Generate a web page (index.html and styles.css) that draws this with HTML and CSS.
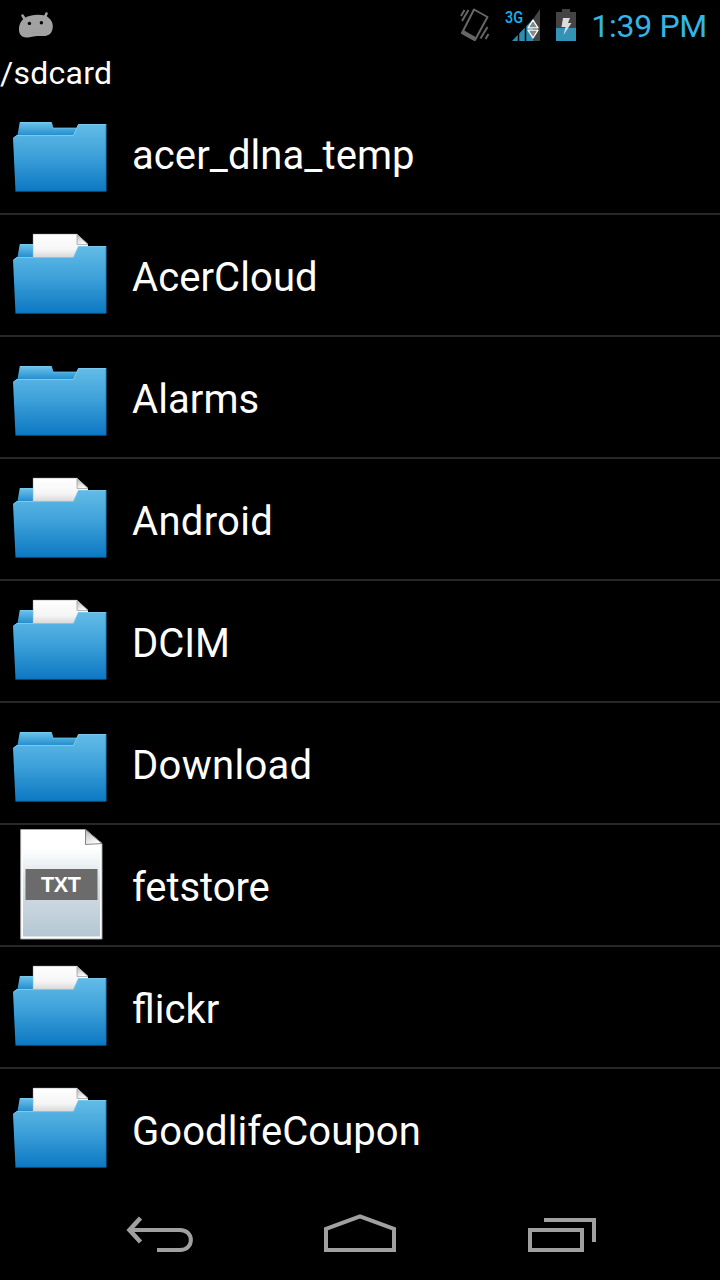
FILE: index.html
```html
<!DOCTYPE html>
<html lang="en">
<head>
<meta charset="utf-8">
<title>File browser</title>
<link rel="stylesheet" href="styles.css">
</head>
<body>
<svg class="defs" width="0" height="0" aria-hidden="true">
  <defs>
    <linearGradient id="front" x1="0" y1="0" x2="0" y2="1"><stop offset="0" stop-color="#63bce7"/><stop offset=".45" stop-color="#3fa2da"/><stop offset="1" stop-color="#0c78c3"/></linearGradient>
    <linearGradient id="tab" x1="0" y1="0" x2="0" y2="1"><stop offset="0" stop-color="#6ec4ec"/><stop offset="1" stop-color="#1583c8"/></linearGradient>
    <linearGradient id="paper" x1="0" y1="0" x2="0" y2="1"><stop offset="0" stop-color="#fff"/><stop offset=".6" stop-color="#f5f5f5"/><stop offset="1" stop-color="#cfcfcf"/></linearGradient>
    <linearGradient id="sheet" x1="0" y1="0" x2="0" y2="1"><stop offset="0" stop-color="#fff"/><stop offset=".16" stop-color="#fff"/><stop offset=".5" stop-color="#d5dfe6"/><stop offset="1" stop-color="#b5c7d3"/></linearGradient>
    <linearGradient id="curl" x1="0" y1="0" x2=".5" y2="1"><stop offset="0" stop-color="#b5b5b5"/><stop offset="1" stop-color="#fff"/></linearGradient>
  </defs>
  <symbol id="folder-back" viewBox="0 0 120 120">
    <path d="M17 45 19.800 29H51.300L53 35H78L76 45Z" fill="url(#tab)"/>
    <path d="M20 29.500H51.500L53 35H77" fill="none" stroke="#7accee" stroke-width=".7"/>
  </symbol>
  <symbol id="folder-front" viewBox="0 0 120 120">
    <path d="M13 45 17 42H73.500L78.500 31H106.300V98.500H15.500Z" fill="url(#front)"/>
    <path d="M13.500 45 17 42.500H73.500L78.500 31.500H106" fill="none" stroke="#7cc8ed"/>
    <path d="M15.500 98H106V32" fill="none" stroke="#0869ad" stroke-width=".8" opacity=".65"/>
  </symbol>
  <symbol id="folder" viewBox="0 0 120 120"><use href="#folder-back"/><use href="#folder-front"/></symbol>
  <symbol id="folder-full" viewBox="0 0 120 120">
    <use href="#folder-back"/>
    <path d="M33 19H77L88 29V45H33Z" fill="url(#paper)"/>
    <path d="M33.300 45V19.300H77" fill="none" stroke="#c9c9c9" stroke-width=".7"/>
    <path d="M77 19.500V29.500H88Z" fill="url(#curl)" stroke="#999" stroke-width=".7"/>
    <use href="#folder-front"/>
  </symbol>
</svg>

<div class="screen">
  <header class="status">
    <svg class="droid" width="36" height="28" viewBox="0 0 36 28">
      <path d="M4.500 4.500 7 8.500M28.500 2.500 26.500 7" stroke="#a2a2a2" stroke-width="2.600" stroke-linecap="round"/>
      <path d="M6 7.500C11 3.500 21 3 27 4.500C33 7 36 13 34.500 18C33.500 23 30 25 26 25C21 25 18 24.500 14 25.800C9 27.500 3 26.500 1.500 22C0 16 2 10.500 6 7.500Z" fill="#a2a2a2"/>
      <circle cx="11.400" cy="12.400" r="1.700"/><circle cx="23.400" cy="11.700" r="1.700"/>
      <path d="M15 18v1M19 18v1M15 21v1M19 21v1" stroke="#939393" stroke-width=".8"/>
    </svg>
    <div class="tray">
      <svg width="32" height="36" viewBox="0 0 32 36" fill="none" stroke="#666">
        <path d="M14 2.500 27.500 10 15 33 2 26Z" stroke-width="2" stroke-linejoin="round"/>
        <path d="M2 24.500 15 32" stroke-width="4"/>
        <path d="M1 9 4.500 3M2 14 8.500 3M20.500 31.500 27.500 20M25.500 32 28.500 27" stroke-width="2"/>
      </svg>
      <svg width="38" height="36" viewBox="0 0 38 36">
        <text class="network" x="0" y="17.500" textLength="18" lengthAdjust="spacingAndGlyphs">3G</text>
        <path d="M7 36 28 14V36Z" fill="#318cb2"/><path d="M28 14 35 4V36H28Z" fill="#444"/>
        <path d="M13.500 26V36M20.500 19V36" stroke="#000" stroke-width="1.500"/>
        <path d="M28 15 33 22.800H23ZM28 33 33 25.200H23Z" fill="#888" stroke="#fff" stroke-width="1.300" stroke-linejoin="round"/>
      </svg>
      <svg width="20" height="36" viewBox="0 0 20 36">
        <path d="M6 4H14V7H20V23H0V7H6Z" fill="#444"/><path d="M0 23H20V36H0Z" fill="#3293b7"/>
        <path d="M7 13H14L12 18H15.500L7.500 30 9.500 22H5.500Z" fill="#ddd"/>
      </svg>
    </div>
    <time class="clock">1:39 PM</time>
  </header>
  <div class="path">/sdcard</div>
  <main class="list">
    <div class="row"><svg class="icon"><use href="#folder"/></svg><span class="name">acer_dlna_temp</span></div>
    <div class="row"><svg class="icon"><use href="#folder-full"/></svg><span class="name">AcerCloud</span></div>
    <div class="row"><svg class="icon"><use href="#folder"/></svg><span class="name">Alarms</span></div>
    <div class="row"><svg class="icon"><use href="#folder-full"/></svg><span class="name loose">Android</span></div>
    <div class="row"><svg class="icon"><use href="#folder-full"/></svg><span class="name tight">DCIM</span></div>
    <div class="row"><svg class="icon"><use href="#folder"/></svg><span class="name loose">Download</span></div>
    <div class="row">
      <svg class="icon" viewBox="0 0 120 120">
        <path d="M20.700 4.500H85.500L102 18.500V114H20.700Z" fill="#fff" stroke="#aaa" stroke-width=".9"/>
        <path d="M23 7H84V20H100V111.500H23Z" fill="url(#sheet)"/>
        <path d="M85.500 4.500V19.500L102 18.500Z" fill="url(#curl)" stroke="#777" stroke-width=".9"/>
        <rect x="25.500" y="44" width="72" height="31" fill="#6b6b6b"/>
        <text class="badge" x="61" y="67.200" text-anchor="middle" textLength="40">TXT</text>
      </svg>
      <span class="name tight">fetstore</span>
    </div>
    <div class="row"><svg class="icon"><use href="#folder-full"/></svg><span class="name joined">flickr</span></div>
    <div class="row"><svg class="icon"><use href="#folder-full"/></svg><span class="name">GoodlifeCoupon</span></div>
  </main>
  <nav class="nav">
    <svg width="68" height="40" viewBox="0 0 68 40"><path class="head" d="M14.500 5 3.500 17 14.500 29"/><path d="M4 17H54C68.500 17 68.500 37 54 37H31"/></svg>
    <svg width="72" height="40" viewBox="0 0 72 40"><path d="M2 37V16L36 3.300 70 16V37Z"/></svg>
    <svg width="68" height="40" viewBox="0 0 68 40"><path d="M2 17H54V37H2ZM16 7H66V29"/></svg>
  </nav>
</div>
</body>
</html>
```
FILE: styles.css
```css
body { margin: 0; background: #000; }
.defs { position: absolute; }
.screen {
  display: flex; flex-direction: column;
  width: 720px; height: 1280px; overflow: hidden;
  background: #000; color: #fff;
  font-family: Roboto, "Noto Sans", sans-serif;
}
.status {
  display: flex; justify-content: space-between;
  box-sizing: border-box; height: 50px; padding: 0 13px 0 18px;
}
.status svg { display: block; }
.droid { margin-top: 11px; }
.tray { display: flex; align-items: flex-start; margin: 5px 15px 0 auto; }
.tray svg:nth-child(1) { margin: 2px 13px 0 0; }
.tray svg:nth-child(2) { margin-right: 13px; }
.network { font: 500 16.500px Roboto, sans-serif; fill: #12b4f4; }
.clock { color: #33b5e5; font-size: 32px; line-height: 52px; letter-spacing: -0.300px; }
.path { height: 43px; font-size: 32px; line-height: 46px; letter-spacing: 0.250px; }
.list { height: 1091px; overflow: hidden; }
.row { display: flex; height: 120px; border-bottom: 2px solid #272727; }
.icon { display: block; width: 120px; height: 120px; margin-right: 12px; }
.name { font-size: 40px; line-height: 126px; letter-spacing: 0.080px; }
.name.loose { letter-spacing: 0.300px; }
.name.tight { letter-spacing: -0.080px; }
.name.joined { letter-spacing: 0; }
.badge { font: bold 21.500px "Liberation Sans", sans-serif; fill: #fff; }
.nav {
  display: flex; justify-content: space-between;
  box-sizing: border-box; height: 96px; padding: 29px 124px 0 124px;
}
.nav svg:first-child { margin-left: 2px; }
.nav svg:nth-child(2) { margin-right: 2px; }
.nav path { fill: none; stroke: #a0a0a0; stroke-width: 4; }
.nav .head { stroke-width: 4.500; }
```
